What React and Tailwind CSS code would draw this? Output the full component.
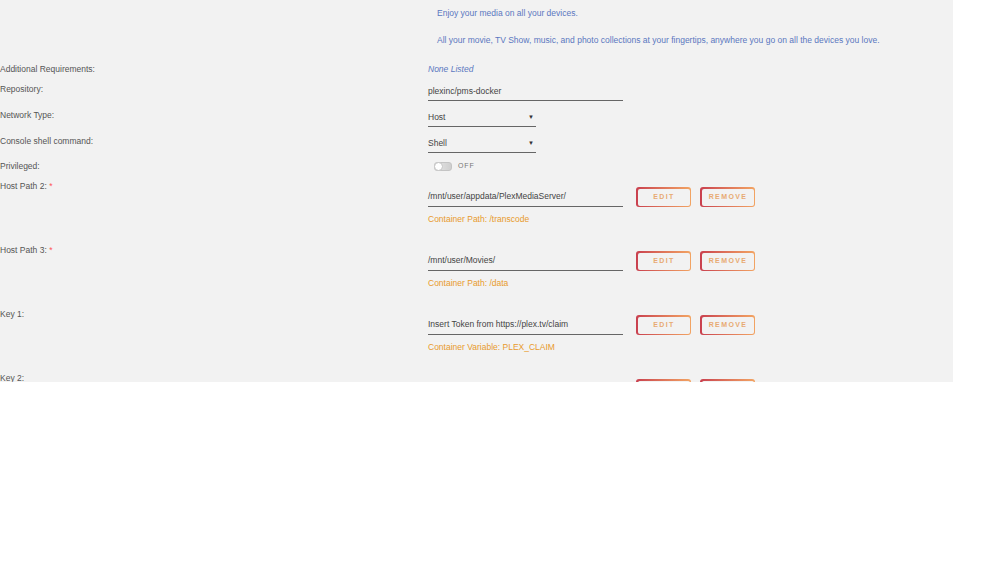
import React from "react";

const labelCls = "w-[428px] shrink-0 text-[8.5px] text-[#555]";

const ActionButton = ({ children }) => (
  <div className="rounded-[3px] bg-gradient-to-r from-[#c9404f] to-[#f2a463] p-[1.5px]">
    <div className="flex h-[17px] w-[52px] items-center justify-center rounded-[2px] bg-[#f2f2f2] pl-[1px] text-[7px] font-bold tracking-[0.2em] text-[#e8aa72]">
      {children}
    </div>
  </div>
);

const PathRow = ({ label, required, value, note }) => (
  <div className="flex h-[64px]">
    <div className={`${labelCls} pt-[5px]`}>
      {label}
      {required && <span className="text-[#f55]"> *</span>}
    </div>
    <div className="flex flex-col pt-[12px]">
      <div className="flex items-start">
        <div className="mr-[13px] flex h-[20px] w-[195px] items-center border-b border-[#666] text-[8.5px] text-[#444]">
          {value}
        </div>
        <div className="mr-[9px]">
          <ActionButton>EDIT</ActionButton>
        </div>
        <ActionButton>REMOVE</ActionButton>
      </div>
      {note && <div className="mt-[6px] text-[8.5px] text-[#e89a2c]">{note}</div>}
    </div>
  </div>
);

const SelectField = ({ value }) => (
  <div className="flex h-[18px] w-[108px] items-center justify-between border-b border-[#666] text-[8.5px] text-[#444]">
    <span>{value}</span>
    <span className="pr-[2px] text-[6px] text-[#333]">▼</span>
  </div>
);

export default function App() {
  return (
    <div className="min-h-[563px] bg-white font-['Liberation_Sans',Arial,sans-serif]">
      <div className="h-[382px] w-[953px] overflow-hidden bg-[#f2f2f2]">
        {/* overview */}
        <div className="flex h-[59px]">
          <div className={labelCls}></div>
          <div className="flex flex-col gap-[14px] pl-[9px] pt-[7px] text-[8.5px] text-[#5a77c0]">
            <p>Enjoy your media on all your devices.</p>
            <p>
              All your movie, TV Show, music, and photo collections at your fingertips, anywhere you go on all the
              devices you love.
            </p>
          </div>
        </div>

        <div className="flex h-[20px] items-center">
          <div className={labelCls}>Additional Requirements:</div>
          <div className="text-[8.5px] italic text-[#5a77c0]">None Listed</div>
        </div>

        <div className="flex h-[26px]">
          <div className={`${labelCls} pt-[4px]`}>Repository:</div>
          <div className="flex h-[22px] w-[195px] items-center border-b border-[#666] pt-[3px] text-[8.5px] text-[#444]">
            plexinc/pms-docker
          </div>
        </div>

        <div className="flex h-[26px]">
          <div className={`${labelCls} pt-[4px]`}>Network Type:</div>
          <div className="pt-[4px]">
            <SelectField value="Host" />
          </div>
        </div>

        <div className="flex h-[26px]">
          <div className={`${labelCls} pt-[4px]`}>Console shell command:</div>
          <div className="pt-[4px]">
            <SelectField value="Shell" />
          </div>
        </div>

        <div className="flex h-[18px] items-center">
          <div className={labelCls}>Privileged:</div>
          <div className="flex items-center gap-[6px] pl-[6px]">
            <div className="relative h-[9px] w-[18px] rounded-[3px] border border-[#c4c4c4] bg-gradient-to-r from-[#e6e6e6] to-[#cfcfcf]">
              <div className="absolute left-[-1px] top-[-1px] h-[9px] w-[9px] rounded-full border border-[#c4c4c4] bg-white"></div>
            </div>
            <span className="text-[7px] tracking-[0.12em] text-[#777]">OFF</span>
          </div>
        </div>

        <PathRow label="Host Path 2:" required value="/mnt/user/appdata/PlexMediaServer/" note="Container Path: /transcode" />
        <PathRow label="Host Path 3:" required value="/mnt/user/Movies/" note="Container Path: /data" />
        <PathRow label="Key 1:" value="Insert Token from https://plex.tv/claim" note="Container Variable: PLEX_CLAIM" />
        <PathRow label="Key 2:" value="" />
      </div>
    </div>
  );
}
